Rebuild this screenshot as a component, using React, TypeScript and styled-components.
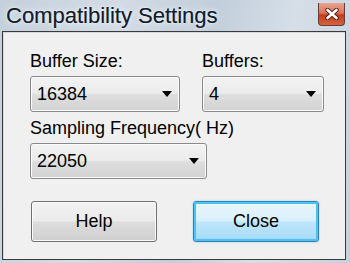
import React from "react";
import styled, { createGlobalStyle } from "styled-components";

const GlobalStyle = createGlobalStyle`
  html, body {
    margin: 0;
    padding: 0;
    background: #c9d4df;
  }
`;

const Window = styled.div`
  width: 350px;
  height: 263px;
  box-sizing: border-box;
  display: flex;
  flex-direction: column;
  padding: 0 4px 3px 2px;
  background: linear-gradient(
    100deg,
    #c4d0dc 0%,
    #d3dce6 30%,
    #c2cedb 55%,
    #d6dfe8 75%,
    #c5d1dd 100%
  );
  font-family: "Liberation Sans", Arial, sans-serif;
`;

const TitleBar = styled.div`
  height: 31px;
  display: flex;
  align-items: flex-start;
  justify-content: space-between;
`;

const Title = styled.div`
  padding: 3px 0 0 4px;
  font-size: 22px;
  color: #121c2b;
  text-shadow: 0 0 6px rgba(255, 255, 255, 0.9), 0 0 2px rgba(255, 255, 255, 0.9),
    0.3px 0 0 #121c2b;
  white-space: nowrap;
`;

const CloseX = styled.div`
  width: 27px;
  height: 23px;
  margin-top: 3px;
  margin-right: 1px;
  box-sizing: border-box;
  border: 1px solid #6b3a30;
  border-top: none;
  border-radius: 0 0 4px 4px;
  background: linear-gradient(#e8a58f 0%, #d9755c 45%, #c43d1e 55%, #d3643e 100%);
  display: flex;
  align-items: center;
  justify-content: center;
`;

const Panel = styled.div`
  flex: 1;
  box-sizing: border-box;
  border: 1px solid #3a3a3a;
  box-shadow: inset 1px 1px 0 #d8d8d8;
  background: #f0f0f0;
  padding: 19px 0 0 27px;
  display: grid;
  grid-template-columns: 150px 122px;
  column-gap: 22px;
  grid-auto-rows: min-content;
`;

const Field = styled.div<{ $span?: number }>`
  display: flex;
  flex-direction: column;
  grid-column: span ${(p) => p.$span || 1};
  margin-bottom: 6px;
`;

const Label = styled.label`
  font-size: 18px;
  line-height: 21px;
  color: #000;
  margin-bottom: 4px;
`;

const Combo = styled.div<{ $width?: number }>`
  width: ${(p) => (p.$width ? p.$width + "px" : "100%")};
  height: 36px;
  box-sizing: border-box;
  border: 1px solid #8a8a8a;
  border-radius: 3px;
  background: linear-gradient(#f3f3f3 0%, #ebebeb 48%, #dedede 52%, #d2d2d2 100%);
  box-shadow: inset 0 0 0 1px #fafafa;
  display: flex;
  align-items: center;
  justify-content: space-between;
  padding: 0 7px 0 6px;
  font-size: 18px;
  color: #000;
`;

const Arrow = styled.span`
  width: 0;
  height: 0;
  border-left: 5px solid transparent;
  border-right: 5px solid transparent;
  border-top: 6px solid #000;
`;

const ButtonRow = styled.div`
  grid-column: span 2;
  display: flex;
  gap: 36px;
  margin-top: 16px;
  padding-left: 1px;
`;

const Button = styled.button<{ $default?: boolean }>`
  width: 126px;
  height: 41px;
  box-sizing: border-box;
  border-radius: 3px;
  font-family: "Liberation Sans", Arial, sans-serif;
  font-size: 18px;
  color: #000;
  border: 1px solid ${(p) => (p.$default ? "#3c7fb1" : "#707070")};
  background: ${(p) =>
    p.$default
      ? "linear-gradient(#eaf6fd 0%, #d9f0fc 48%, #bee6fd 52%, #a7d9f5 100%)"
      : "linear-gradient(#f2f2f2 0%, #ebebeb 48%, #dddddd 52%, #cfcfcf 100%)"};
  box-shadow: ${(p) =>
    p.$default
      ? "inset 0 0 0 2px #48c3f5, 0 0 2px #6fc8f0"
      : "inset 0 0 0 1px #fbfbfb"};
  padding: 0;
`;

export default function App() {
  return (
    <>
      <GlobalStyle />
      <Window>
        <TitleBar>
          <Title>Compatibility Settings</Title>
          <CloseX>
            <svg width="14" height="12" viewBox="0 0 14 12">
              <path
                d="M2.5 2 L11.5 10 M11.5 2 L2.5 10"
                stroke="#4a2218"
                strokeWidth="4.4"
                strokeLinecap="round"
                fill="none"
              />
              <path
                d="M2.5 2 L11.5 10 M11.5 2 L2.5 10"
                stroke="#ffffff"
                strokeWidth="2.6"
                strokeLinecap="round"
                fill="none"
              />
            </svg>
          </CloseX>
        </TitleBar>
        <Panel>
          <Field>
            <Label>Buffer Size:</Label>
            <Combo>
              16384
              <Arrow />
            </Combo>
          </Field>
          <Field>
            <Label>Buffers:</Label>
            <Combo>
              4
              <Arrow />
            </Combo>
          </Field>
          <Field $span={2}>
            <Label>Sampling Frequency( Hz)</Label>
            <Combo $width={177}>
              22050
              <Arrow />
            </Combo>
          </Field>
          <ButtonRow>
            <Button>Help</Button>
            <Button $default>Close</Button>
          </ButtonRow>
        </Panel>
      </Window>
    </>
  );
}
